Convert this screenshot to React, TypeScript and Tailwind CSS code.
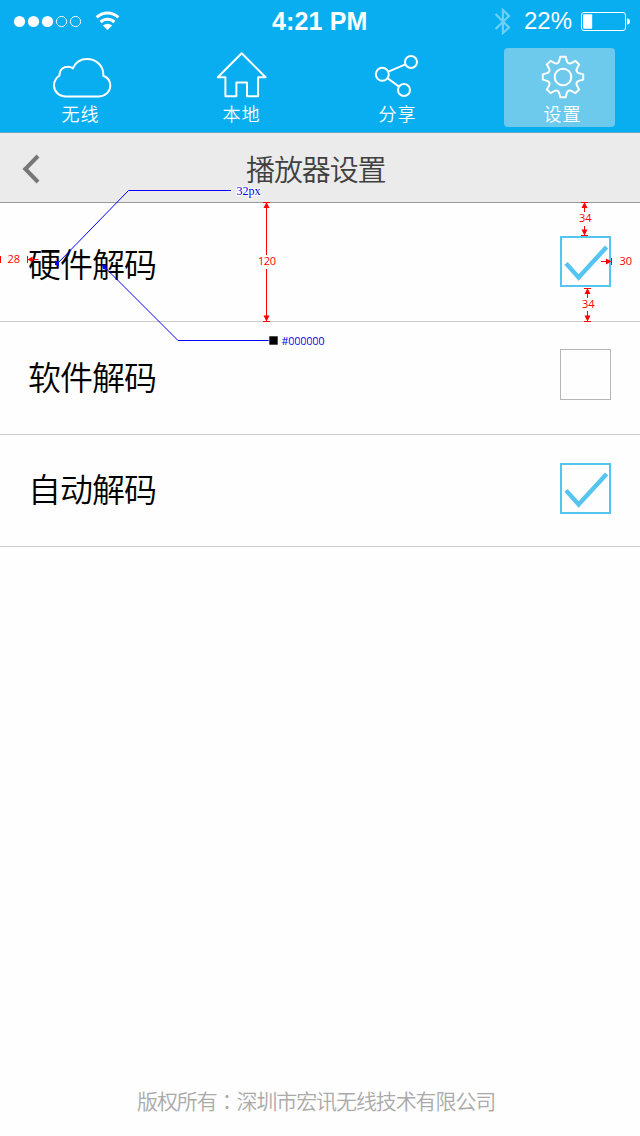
import type { ReactNode } from "react";

const CJK = "font-['Noto_Sans_CJK_SC',sans-serif]";

function gearPath(cx: number, cy: number) {
  const points: string[] = [];
  const at = (along: number, side: number, angle: number) => {
    const x = cx + along * Math.sin(angle) + side * Math.cos(angle);
    const y = cy - along * Math.cos(angle) + side * Math.sin(angle);
    return `${x.toFixed(2)} ${y.toFixed(2)}`;
  };
  for (let i = 0; i < 8; i++) {
    const a = (i * Math.PI) / 4;
    const next = a + Math.PI / 8;
    points.push(`${i === 0 ? "M" : "L"}${at(15.2, -4.1, a)}`);
    points.push(`L${at(20.2, -2.6, a)} L${at(20.2, 2.6, a)} L${at(15.2, 4.1, a)}`);
    points.push(`Q${at(14, 0, next)} ${at(15.2, -4.1, a + Math.PI / 4)}`);
  }
  return points.join(" ") + "Z";
}

function StatusBar() {
  return (
    <div className="flex h-[41px] items-center text-white">
      <svg className="ml-3 h-10 w-[110px]" viewBox="12 0 110 40">
        <g fill="white">
          <circle cx="19.5" cy="20.5" r="5.6" />
          <circle cx="33.5" cy="20.5" r="5.6" />
          <circle cx="47.5" cy="20.5" r="5.6" />
        </g>
        <g fill="none" stroke="white" strokeWidth="1">
          <circle cx="61.5" cy="20.5" r="5.1" />
          <circle cx="75.5" cy="20.5" r="5.1" />
        </g>
        <g fill="none" stroke="white" strokeWidth="3">
          <path d="M96.7 16.4a15.6 15.6 0 0 1 21.6 0" />
          <path d="M100.6 21.1a10 10 0 0 1 13.8 0" />
        </g>
        <path d="M102.8 24.6q4.7-3.6 9.4 0L107.5 29z" fill="white" />
      </svg>
      <div className="ml-[150px] w-[100px] whitespace-nowrap font-['Liberation_Sans',sans-serif] text-[25px] leading-[40px] font-bold tracking-[0.15px]">
        4:21 PM
      </div>
      <svg className="ml-[120px] h-10 w-5" viewBox="492 0 20 40">
        <path
          d="M495.5 13 L509 26.5 L502.9 32 V9 L509 15 L495.5 28"
          fill="none"
          stroke="white"
          strokeOpacity="0.42"
          strokeWidth="2.2"
        />
      </svg>
      <div className="ml-[12px] w-[50px] whitespace-nowrap font-['Liberation_Sans',sans-serif] text-[24px] leading-[40px]">
        22%
      </div>
      <svg className="ml-[6px] h-10 w-[52px]" viewBox="580 0 52 40">
        <rect x="581.5" y="11.5" width="44" height="18" rx="2.5" fill="none" stroke="white" />
        <rect x="583" y="13.2" width="9.2" height="14.6" rx="1" fill="white" />
        <path d="M627 17.2q3 .6 3 3.3t-3 3.3z" fill="white" />
      </svg>
    </div>
  );
}

function NavItem({ label, className, children }: { label: string; className: string; children: ReactNode }) {
  return (
    <div className={`flex h-[79px] w-[111px] flex-col items-center rounded-[4px] ${className}`}>
      <svg className="h-[52px] w-[111px] shrink-0" viewBox="0 0 111 52" fill="none" stroke="white" strokeWidth="2">
        {children}
      </svg>
      <span className="h-[27px] text-[18px] leading-[27px] font-[350] tracking-[1px] text-white">{label}</span>
    </div>
  );
}

function Nav() {
  return (
    <div className="flex h-[91px] pt-[7px]">
      <NavItem label="无线" className="ml-[25px]">
        <path
          transform="translate(-25 -48)"
          d="M66 96.5C58.5 96.5 54 91 54 85.5C54 81 56.5 77.5 59.5 75.5C59.5 69.5 63.5 66.7 68 66.7C70 66.7 71.5 67.2 72.8 68.2C75.5 62.5 80.5 59 87 59C96.5 59 103.3 66 103.3 74.5V75.8C107.5 77.5 110.3 80.8 110.3 85.5C110.3 91.8 105 96.5 98.5 96.5Z"
        />
      </NavItem>
      <NavItem label="本地" className="ml-[50px]">
        <path
          transform="translate(-186 -48)"
          strokeLinejoin="round"
          d="M241.7 53.3L217.8 77.2H225.4V96.3H236.4V82.5H247V96.3H258.1V77.2H265.6Z"
        />
      </NavItem>
      <NavItem label="分享" className="ml-[45px]">
        <g transform="translate(-342 -48)">
          <circle cx="382.3" cy="74.3" r="6.5" />
          <circle cx="411" cy="62" r="6" />
          <circle cx="404" cy="90" r="6" />
          <path d="M388.4 71.7L405.4 64.4M387.6 78.2L399 86.6" />
        </g>
      </NavItem>
      <NavItem label="设置" className="ml-[51px] bg-[#6dcaed] pl-[6px]">
        <g transform="translate(-507 -48)">
          <path d={gearPath(563, 77)} />
          <circle cx="563" cy="77" r="8.3" />
        </g>
      </NavItem>
    </div>
  );
}

function Checkbox({ checked }: { checked: boolean }) {
  return checked ? (
    <span className="flex size-[51px] border-2 border-[#54c4f0]">
      <svg viewBox="0 0 47 47" className="size-[47px]">
        <path d="M4 25.4L16.6 39.4L44.6 9" fill="none" stroke="#54c4f0" strokeWidth="4.4" />
      </svg>
    </span>
  ) : (
    <span className="size-[51px] border border-[#b5b5b5]" />
  );
}

function SettingRow({
  label,
  checked,
  className,
  labelClassName,
}: {
  label: string;
  checked: boolean;
  className: string;
  labelClassName: string;
}) {
  return (
    <div className={`flex items-start justify-between border-b border-[#cccccc] pr-[29px] pl-[28px] ${className}`}>
      <span className={`text-[33px] leading-[56px] font-[350] tracking-[-1px] text-black ${labelClassName}`}>
        {label}
      </span>
      <Checkbox checked={checked} />
    </div>
  );
}

function VerticalMeasure({ x, top, bottom, gap }: { x: number; top: number; bottom: number; gap: [number, number] }) {
  return (
    <g stroke="none" fill="#ff0000">
      <rect x={x - 3.5} y={top} width="7" height="1" />
      <rect x={x - 3.5} y={bottom - 1} width="7" height="1" />
      <rect x={x - 0.5} y={top} width="1" height={gap[0] - top} />
      <rect x={x - 0.5} y={gap[1]} width="1" height={bottom - gap[1]} />
      <path d={`M${x} ${top}l3 6h-6zM${x} ${bottom - 0.5}l3-6h-6z`} />
    </g>
  );
}

function Annotations() {
  return (
    <svg className="pointer-events-none absolute inset-0 h-[1136px] w-[640px]" viewBox="0 0 640 1136">
      <g fill="none" stroke="#0000ff" strokeWidth="1">
        <path d="M57.5 263.5L128.5 190.5H231" />
        <path d="M104.5 267L178 340.5H269" />
      </g>
      <g fill="#0000ff">
        <path d="M55 260.5l4 1.5v4l-4-1zM102 264.5l4 .5 1 5-4-1z" />
      </g>
      <rect x="269" y="336" width="9" height="9" fill="#000000" stroke="#ffffff" strokeWidth="0.6" />
      <g fill="#0000e6" stroke="#ffffff" strokeWidth="2" style={{ paintOrder: "stroke" }}>
        <text x="236.5" y="195" fontSize="12" fontFamily="Liberation Serif, serif">32px</text>
        <text x="281.5" y="345" fontSize="11" textLength="43" fontFamily="Open Sans, sans-serif">#000000</text>
      </g>
      <VerticalMeasure x={266.5} top={202} bottom={322} gap={[255, 269]} />
      <VerticalMeasure x={584.5} top={202} bottom={236} gap={[212, 226]} />
      <VerticalMeasure x={587.5} top={288} bottom={322} gap={[298, 311]} />
      <g fill="#ff0000">
        <rect x="0" y="256" width="1" height="7" />
        <rect x="27" y="256" width="1" height="7" />
        <path d="M27.5 259.5l5-3v2.5h6v1h-6v2.5z" />
        <rect x="611" y="258" width="1" height="7" />
        <path d="M611.5 261.5l-5.5-3v2.5h-5v1h5v2.5z" />
      </g>
      <g fill="#ff0000" fontSize="11" fontFamily="Open Sans, sans-serif">
        <text x="7.5" y="263">28</text>
        <text x="258" y="265" textLength="18">120</text>
        <text x="579" y="222">34</text>
        <text x="582" y="308">34</text>
        <text x="619.5" y="265">30</text>
      </g>
    </svg>
  );
}

export default function App() {
  return (
    <div className={`relative flex h-[1136px] w-[640px] flex-col overflow-hidden bg-[#fefefe] ${CJK}`} lang="zh-CN">
      <header className="h-[133px] border-b border-[#66a9c7] bg-[#08aeef]">
        <StatusBar />
        <Nav />
      </header>
      <div className="flex h-[70px] items-center border-b border-[#999999] bg-[#ebebeb]">
        <svg className="mt-[2px] ml-5 h-[34px] w-6" viewBox="20 152 24 34">
          <path d="M38 156L25.3 169L38 182" fill="none" stroke="#777777" strokeWidth="4" />
        </svg>
        <h1 className="ml-[202px] pt-px text-[29px] leading-[40px] font-[350] tracking-[-1.1px] text-[#404040]">
          播放器设置
        </h1>
      </div>
      <main className="flex-1">
        <SettingRow label="硬件解码" checked className="h-[119px] pt-[33px]" labelClassName="-mt-px" />
        <SettingRow label="软件解码" checked={false} className="h-[113px] pt-[27px]" labelClassName="-mt-px" />
        <SettingRow label="自动解码" checked className="h-[112px] pt-[28px]" labelClassName="-mt-[3px]" />
      </main>
      <footer className="-mt-px flex h-[51px] pl-[137px] text-[21px] leading-[30px] font-[350] tracking-[-1.1px] text-[#aaaaaa]">
        <p>
          版权所有<span className="font-['Noto_Sans_CJK_TC',sans-serif]" lang="zh-TW">：</span>深圳市宏讯无线技术有限公司
        </p>
      </footer>
      <Annotations />
    </div>
  );
}
